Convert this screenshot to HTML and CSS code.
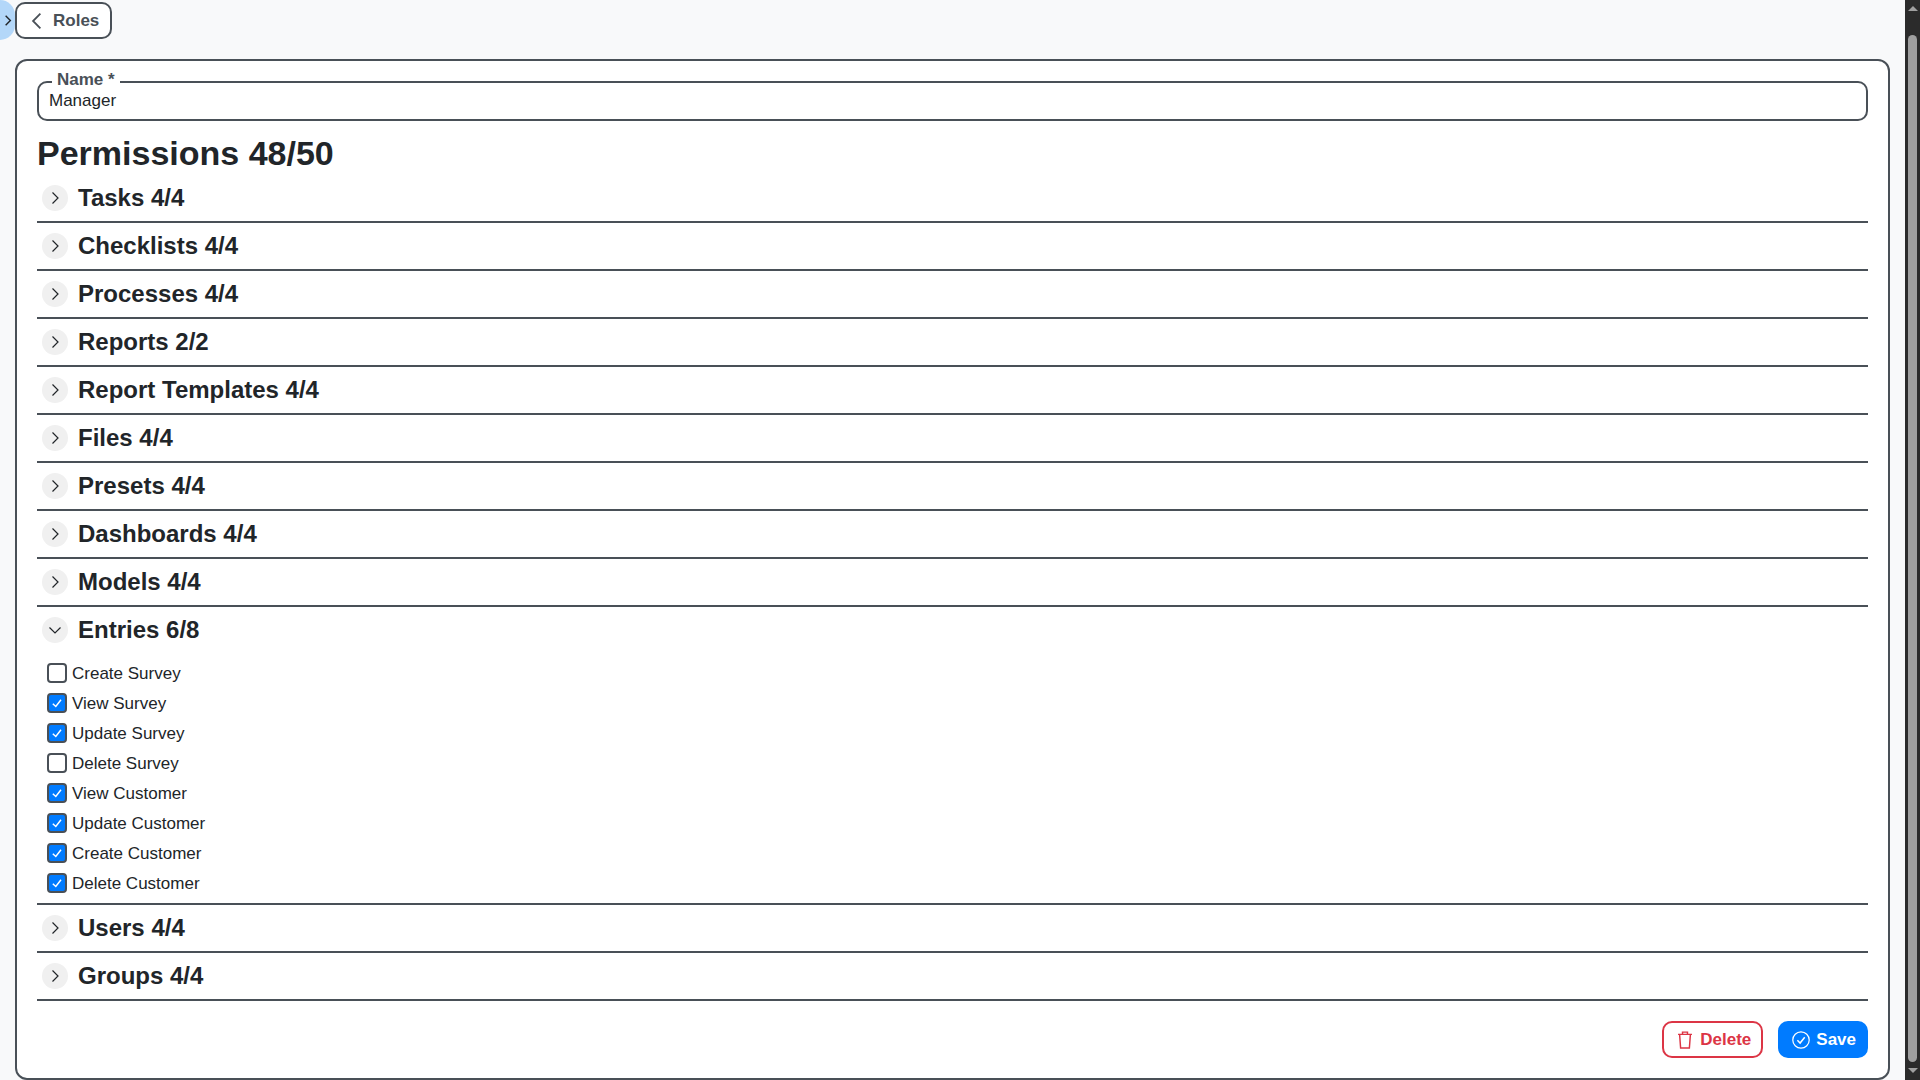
FILE: index.html
```html
<!DOCTYPE html>
<html lang="en">
<head>
    <meta charset="UTF-8">
    <title>Roles - Manager</title>
    <link rel="stylesheet" href="styles.css">
</head>
<body>

    <!-- Sidebar toggle -->
    <button class="sidebar-toggle" aria-label="Open sidebar">
        <svg width="8" height="11" viewBox="3 1 10 14" fill="none" stroke="currentColor" stroke-width="1.8"><path d="M5 2 11 8l-6 6"/></svg>
    </button>

    <main class="page">
        <div class="top-bar">
            <a class="back-btn" href="#">
                <svg width="18" height="18" viewBox="0 0 16 16" fill="none" stroke="currentColor" stroke-width="1.6"><path d="M11 1.5 4.5 8l6.5 6.5"/></svg>
                Roles
            </a>
        </div>

        <form class="card">
            <div class="field">
                <label for="roleName">Name *</label>
                <input type="text" id="roleName" value="Manager">
            </div>

            <h2 class="perm-title">Permissions 48/50</h2>

            <section class="perm-group">
                <div class="perm-head"><span class="toggle"><svg viewBox="0 0 16 16"><path d="M5.5 2.5 11 8l-5.5 5.5"/></svg></span><h3>Tasks 4/4</h3></div>
            </section>
            <section class="perm-group">
                <div class="perm-head"><span class="toggle"><svg viewBox="0 0 16 16"><path d="M5.5 2.5 11 8l-5.5 5.5"/></svg></span><h3>Checklists 4/4</h3></div>
            </section>
            <section class="perm-group">
                <div class="perm-head"><span class="toggle"><svg viewBox="0 0 16 16"><path d="M5.5 2.5 11 8l-5.5 5.5"/></svg></span><h3>Processes 4/4</h3></div>
            </section>
            <section class="perm-group">
                <div class="perm-head"><span class="toggle"><svg viewBox="0 0 16 16"><path d="M5.5 2.5 11 8l-5.5 5.5"/></svg></span><h3>Reports 2/2</h3></div>
            </section>
            <section class="perm-group">
                <div class="perm-head"><span class="toggle"><svg viewBox="0 0 16 16"><path d="M5.5 2.5 11 8l-5.5 5.5"/></svg></span><h3>Report Templates 4/4</h3></div>
            </section>
            <section class="perm-group">
                <div class="perm-head"><span class="toggle"><svg viewBox="0 0 16 16"><path d="M5.5 2.5 11 8l-5.5 5.5"/></svg></span><h3>Files 4/4</h3></div>
            </section>
            <section class="perm-group">
                <div class="perm-head"><span class="toggle"><svg viewBox="0 0 16 16"><path d="M5.5 2.5 11 8l-5.5 5.5"/></svg></span><h3>Presets 4/4</h3></div>
            </section>
            <section class="perm-group">
                <div class="perm-head"><span class="toggle"><svg viewBox="0 0 16 16"><path d="M5.5 2.5 11 8l-5.5 5.5"/></svg></span><h3>Dashboards 4/4</h3></div>
            </section>
            <section class="perm-group">
                <div class="perm-head"><span class="toggle"><svg viewBox="0 0 16 16"><path d="M5.5 2.5 11 8l-5.5 5.5"/></svg></span><h3>Models 4/4</h3></div>
            </section>

            <section class="perm-group">
                <div class="perm-head"><span class="toggle"><svg viewBox="0 0 16 16"><path d="M2.5 5.5 8 11l5.5-5.5"/></svg></span><h3>Entries 6/8</h3></div>
                <ul class="perm-list">
                    <li><span class="check"></span>Create Survey</li>
                    <li><span class="check on"><svg viewBox="0 0 16 16"><path d="M3.8 8.8 6.8 11.500 12 4.8"/></svg></span>View Survey</li>
                    <li><span class="check on"><svg viewBox="0 0 16 16"><path d="M3.8 8.8 6.8 11.500 12 4.8"/></svg></span>Update Survey</li>
                    <li><span class="check"></span>Delete Survey</li>
                    <li><span class="check on"><svg viewBox="0 0 16 16"><path d="M3.8 8.8 6.8 11.500 12 4.8"/></svg></span>View Customer</li>
                    <li><span class="check on"><svg viewBox="0 0 16 16"><path d="M3.8 8.8 6.8 11.500 12 4.8"/></svg></span>Update Customer</li>
                    <li><span class="check on"><svg viewBox="0 0 16 16"><path d="M3.8 8.8 6.8 11.500 12 4.8"/></svg></span>Create Customer</li>
                    <li><span class="check on"><svg viewBox="0 0 16 16"><path d="M3.8 8.8 6.8 11.500 12 4.8"/></svg></span>Delete Customer</li>
                </ul>
            </section>

            <section class="perm-group">
                <div class="perm-head"><span class="toggle"><svg viewBox="0 0 16 16"><path d="M5.5 2.5 11 8l-5.5 5.5"/></svg></span><h3>Users 4/4</h3></div>
            </section>
            <section class="perm-group">
                <div class="perm-head"><span class="toggle"><svg viewBox="0 0 16 16"><path d="M5.5 2.5 11 8l-5.5 5.5"/></svg></span><h3>Groups 4/4</h3></div>
            </section>

            <div class="actions">
                <button type="button" class="btn btn-delete">
                    <svg width="18" height="18" viewBox="0 0 16 16" fill="none" stroke="currentColor" stroke-width="1.3"><path d="M1.8 3h12.400M5.8 2.8V1h4.400v1.8M3.200 3l.9 12.100h7.800l.9-12.100"/></svg>
                    Delete
                </button>
                <button type="button" class="btn btn-save">
                    <svg width="18" height="18" viewBox="0 0 16 16" fill="none" stroke="currentColor" stroke-width="1.1"><circle cx="8" cy="8" r="7.3"/><path d="M4.8 8.3 7.2 10.7 11.3 5.5" stroke-width="1.3"/></svg>
                    Save
                </button>
            </div>
        </form>
    </main>

    <!-- Window scrollbar -->
    <div class="scrollbar">
        <span class="arrow up"></span>
        <span class="thumb"></span>
        <span class="arrow down"></span>
    </div>

</body>
</html>
```

FILE: styles.css
```css
* {
    box-sizing: border-box;
}

html, body {
    height: 100%;
}

body {
    margin: 0;
    display: flex;
    overflow: hidden;
    background: #f8f9fa;
    color: #212529;
    font-family: "Liberation Sans", Arial, sans-serif;
    font-size: 17px;
}

.sidebar-toggle {
    position: absolute;
    top: 0;
    left: 0;
    width: 15px;
    height: 40px;
    padding: 0 0 0 4px;
    border: none;
    border-radius: 0 15px 15px 0;
    background: #b3d7f9;
    color: #212529;
    display: flex;
    align-items: center;
}

.page {
    flex: 1;
    min-width: 0;
    padding: 2px 15px 0;
    display: flex;
    flex-direction: column;
}

.top-bar {
    display: flex;
    height: 57px;
    flex-shrink: 0;
}

.back-btn {
    display: flex;
    align-items: center;
    gap: 7px;
    height: 37px;
    padding: 0 11px;
    border: 2px solid #495057;
    border-radius: 10px;
    background: #fff;
    color: #495057;
    font-weight: bold;
    text-decoration: none;
}

.card {
    flex: 1;
    margin-bottom: 1px;
    padding: 20px;
    background: #fff;
    border: 2px solid #495057;
    border-radius: 12px;
}

.field {
    position: relative;
    display: flex;
    height: 40px;
    padding: 0 10px;
    border: 2px solid #495057;
    border-radius: 10px;
}

.field label {
    position: absolute;
    top: -13px;
    left: 13px;
    padding: 0 5px;
    background: #fff;
    color: #495057;
    font-weight: bold;
    line-height: 20px;
}

.field input {
    flex: 1;
    padding: 0;
    border: none;
    outline: none;
    background: none;
    color: #212529;
    font: 17px "Liberation Sans", Arial, sans-serif;
}

.perm-title {
    margin: 12px 0 2px;
    font-size: 34px;
    line-height: 40px;
    font-weight: bold;
}

.perm-group {
    border-bottom: 2px solid #495057;
}

.perm-head {
    display: flex;
    align-items: center;
    height: 46px;
    padding-left: 5px;
}

.perm-head h3 {
    margin: 0 0 0 10px;
    font-size: 24px;
    font-weight: bold;
}

.toggle {
    width: 26px;
    height: 26px;
    border-radius: 50%;
    background: #f0f0f0;
    display: flex;
    align-items: center;
    justify-content: center;
}

.toggle svg {
    width: 16px;
    height: 16px;
    fill: none;
    stroke: #212529;
    stroke-width: 1.2;
}

.perm-list {
    list-style: none;
    margin: 0;
    padding: 6px 0 4px 10px;
}

.perm-list li {
    display: flex;
    align-items: center;
    height: 30px;
}

.check {
    width: 20px;
    height: 20px;
    margin: 0 5px 2px 0;
    border: 2px solid #495057;
    border-radius: 4px;
    background: #fff;
}

.check.on {
    background: #007bff;
}

.check svg {
    display: block;
    width: 16px;
    height: 16px;
    fill: none;
    stroke: #fff;
    stroke-width: 1.5;
}

.actions {
    display: flex;
    justify-content: flex-end;
    gap: 15px;
    margin-top: 20px;
}

.btn {
    display: flex;
    align-items: center;
    gap: 6px;
    height: 37px;
    padding: 0 10px 0 12px;
    border: 2px solid;
    border-radius: 10px;
    font: bold 17px "Liberation Sans", Arial, sans-serif;
}

.btn-delete {
    background: #fff;
    border-color: #dc3545;
    color: #dc3545;
}

.btn-save {
    background: #007bff;
    border-color: #007bff;
    color: #fff;
}

.scrollbar {
    width: 15px;
    flex-shrink: 0;
    background: #2b2b2b;
    display: flex;
    flex-direction: column;
    align-items: center;
    padding: 6px 0 7px;
}

.thumb {
    flex: 1;
    width: 9px;
    margin: 24px 0 6px;
    border-radius: 5px;
    background: #9f9f9f;
}

.arrow {
    width: 0;
    height: 0;
    border-left: 5px solid transparent;
    border-right: 5px solid transparent;
}

.arrow.up {
    border-bottom: 5px solid #a0a0a0;
}

.arrow.down {
    border-top: 5px solid #a0a0a0;
}
```
